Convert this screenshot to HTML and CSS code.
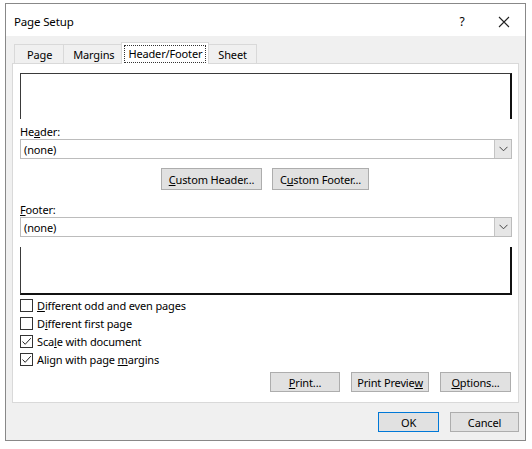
FILE: index.html
```html
<!DOCTYPE html>
<html>
<head>
<meta charset="utf-8">
<link rel="stylesheet" href="styles.css">
</head>
<body>
<div class="window">
  <div class="titlebar">
    <span class="title">Page Setup</span>
    <span class="help">?</span>
    <span class="close"><svg width="12" height="12" viewBox="0 0 12 12"><path d="M1 1 L11 11 M11 1 L1 11" stroke="#222" stroke-width="1.1" fill="none"/></svg></span>
  </div>
  <div class="body">
    <div class="tabs">
      <div class="tab">Page</div>
      <div class="tab">Margins</div>
      <div class="tab active"><span class="focus">Header/Footer</span></div>
      <div class="tab">Sheet</div>
    </div>
    <div class="panel">
      <div class="preview header-preview"></div>
      <div class="label">He<u>a</u>der:</div>
      <div class="select"><span>(none)</span><span class="drop"><svg width="9" height="6" viewBox="0 0 9 6"><path d="M0.5 0.8 L4.5 4.8 L8.5 0.8" stroke="#444" stroke-width="1" fill="none"/></svg></span></div>
      <div class="custom-row">
        <button class="btn custom-h"><u>C</u>ustom Header...</button>
        <button class="btn custom-f">C<u>u</u>stom Footer...</button>
      </div>
      <div class="label"><u>F</u>ooter:</div>
      <div class="select"><span>(none)</span><span class="drop"><svg width="9" height="6" viewBox="0 0 9 6"><path d="M0.5 0.8 L4.5 4.8 L8.5 0.8" stroke="#444" stroke-width="1" fill="none"/></svg></span></div>
      <div class="preview footer-preview"></div>
      <div class="checks">
        <div class="check"><span class="box"></span><span><u>D</u>ifferent odd and even pages</span></div>
        <div class="check"><span class="box"></span><span>D<u>i</u>fferent first page</span></div>
        <div class="check"><span class="box"><svg width="11" height="11" viewBox="0 0 11 11"><path d="M1.5 5.5 L4.2 8.3 L9.8 2.2" stroke="#222" stroke-width="1" fill="none"/></svg></span><span>Sca<u>l</u>e with document</span></div>
        <div class="check"><span class="box"><svg width="11" height="11" viewBox="0 0 11 11"><path d="M1.5 5.5 L4.2 8.3 L9.8 2.2" stroke="#222" stroke-width="1" fill="none"/></svg></span><span>Align with page <u>m</u>argins</span></div>
      </div>
      <div class="action-row">
        <button class="btn print"><u>P</u>rint...</button>
        <button class="btn preview-btn">Print Previe<u>w</u></button>
        <button class="btn options"><u>O</u>ptions...</button>
      </div>
    </div>
    <div class="footer-row">
      <button class="btn ok">OK</button>
      <button class="btn cancel">Cancel</button>
    </div>
  </div>
</div>
</body>
</html>
```
FILE: styles.css
```css
* { box-sizing: border-box; }
html, body { margin: 0; padding: 0; background: #ffffff; }
body {
  font-family: "Noto Sans", "Open Sans", sans-serif;
  font-size: 11px;
  letter-spacing: -0.15px;
  color: #000;
}
.window {
  margin: 3px 0 0 5px;
  width: 521px;
  height: 438px;
  border: 1px solid #888888;
  background: #f0f0f0;
  display: flex;
  flex-direction: column;
}
.titlebar {
  height: 32px;
  background: #ffffff;
  display: flex;
  align-items: center;
  padding: 0 0 0 8px;
}
.title { flex: 1; font-size: 11.5px; padding-top: 2px; }
.help { width: 20px; font-size: 12px; padding-top: 2px; margin-right: 26px; text-align: center; }
.close { width: 14px; margin-right: 13px; display: flex; align-items: center; padding-top: 3px; }
.body {
  padding: 6px 6px 0 6px;
  display: flex;
  flex-direction: column;
}
.tabs {
  display: flex;
  align-items: flex-end;
  height: 21px;
  padding-left: 2px;
  position: relative;
  z-index: 1;
}
.tab {
  height: 19px;
  padding: 1px 9px 0 9px;
  border: 1px solid #d9d9d9;
  border-bottom: none;
  margin-right: -1px;
  background: #f0f0f0;
  display: flex;
  align-items: center;
  line-height: 1;
}
.tab:first-child { padding: 1px 11px 0 12px; }
.tab:nth-child(2) { padding: 1px 10px 0 9px; }
.tab.active {
  height: 22px;
  margin: 0 -1px -1px -3px;
  padding: 0 2px;
  background: #ffffff;
  border-color: #d9d9d9;
  position: relative;
  z-index: 2;
}
.focus {
  border: 1px dotted #333;
  padding: 1px 3px 2px 3px;
  line-height: 13px;
}
.panel {
  background: #ffffff;
  border: 1px solid #d9d9d9;
  height: 340px;
  padding: 9px 6px 0 7px;
  display: flex;
  flex-direction: column;
}
.preview { width: 492px; }
.header-preview {
  height: 46px;
  border-top: 1px solid #3a3a3a;
  border-left: 1.5px solid #3a3a3a;
  border-right: 2px solid #111;
}
.footer-preview {
  height: 48px;
  margin-top: 10px;
  border-left: 1.5px solid #3a3a3a;
  border-right: 2px solid #111;
  border-bottom: 2px solid #111;
}
.label {
  margin-top: 5px;
  height: 15px;
  line-height: 15px;
}
.select {
  width: 492px;
  height: 20px;
  border: 1px solid #bcbcbc;
  display: flex;
  align-items: center;
  justify-content: space-between;
  padding-left: 3px;
}
.drop {
  width: 17px;
  height: 18px;
  background: #e6e6e6;
  border-left: 1px solid #c4c4c4;
  display: flex;
  align-items: center;
  justify-content: center;
}
.btn {
  font-family: inherit;
  font-size: 11px;
  letter-spacing: -0.15px;
  color: #000;
  background: #e1e1e1;
  border: 1px solid #adadad;
  padding: 0;
  height: 20px;
  line-height: 1;
}
.custom-row {
  display: flex;
  margin-top: 9px;
  padding-left: 141px;
  gap: 10px;
  height: 22px;
}
.custom-row .btn { height: 22px; }
.custom-h { width: 101px; }
.custom-f { width: 97px; }
.custom-row + .label { margin-top: 12px; }
.checks {
  margin-top: 1px;
  display: flex;
  flex-direction: column;
}
.check {
  height: 18px;
  display: flex;
  align-items: center;
  gap: 4px;
}
.box {
  width: 13px;
  height: 13px;
  border: 1px solid #333;
  background: #fff;
  display: flex;
  align-items: center;
  justify-content: center;
}
.action-row {
  display: flex;
  margin-top: 4px;
  padding-left: 250px;
  gap: 11px;
}
.print { width: 70px; }
.preview-btn { width: 78px; }
.options { width: 71px; }
.footer-row {
  display: flex;
  justify-content: flex-end;
  gap: 11px;
  margin-top: 9px;
}
.ok { width: 61px; border: 1px solid #0078d7; }
.cancel { width: 69px; }
```
